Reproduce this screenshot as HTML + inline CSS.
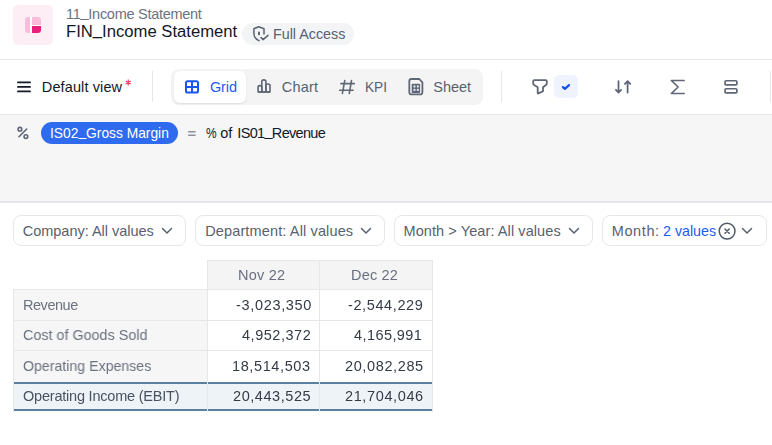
<!DOCTYPE html>
<html><head><meta charset="utf-8">
<style>
*{margin:0;padding:0;box-sizing:border-box}
html,body{width:772px;height:445px;overflow:hidden;background:#fff}
body{position:relative;font-family:"Liberation Sans",sans-serif}
.a{position:absolute}
.t{position:absolute;white-space:nowrap;line-height:20px;height:20px}
svg{position:absolute;overflow:visible}
.g{will-change:transform}
.u{position:relative;top:-1.6px}
</style></head><body>
<!-- header -->
<div class="a" style="left:13px;top:5px;width:40px;height:40px;border-radius:5px;background:#fdedf5"></div>
<div class="a" style="left:25px;top:17px;width:16px;height:16px;background:#fff;border-radius:3px"></div>
<div class="a" style="left:25px;top:17px;width:5px;height:16px;border-radius:3px 0 0 3px;background:#f9bddb"></div>
<div class="a" style="left:31.5px;top:17px;width:9.5px;height:7.5px;border-radius:0 3px 0 0;background:#f9bddb"></div>
<div class="a" style="left:31.5px;top:25.5px;width:9.5px;height:7.5px;border-radius:0 0 3px 0;background:#ea1f7b"></div>

<div class="a" style="left:242px;top:23px;width:112px;height:22px;border-radius:11px;background:#f3f4f6"></div>
<svg style="left:250px;top:24px" width="22" height="20" viewBox="0 0 22 20" fill="none" stroke="#596170" stroke-width="1.5" stroke-linecap="round" stroke-linejoin="round">
<path d="M9 16.6C5.8 15.2 3.9 12.6 3.9 9.4V4.7L8.8 2.8L14 4.7V10"/>
<path d="M11.1 13.6L13.1 15.6L18 11.4"/>
<path d="M9 8.4V10.2" stroke-width="2"/>
</svg>

<div class="a" style="left:0;top:59px;width:772px;height:1px;background:#e5e7eb"></div>

<!-- toolbar -->
<svg style="left:14px;top:77px" width="20" height="20" viewBox="0 0 20 20" fill="none" stroke="#141a2a" stroke-width="1.9" stroke-linecap="round">
<path d="M4 5.4H16M4 9.9H16M4 14.4H16"/>
</svg>
<svg style="left:123px;top:78px" width="10" height="9" viewBox="0 0 10 9" fill="none" stroke="#e3405a" stroke-width="1.15" stroke-linecap="butt">
<path d="M5.25 1.5V7.4M2.7 3L7.8 5.9M7.8 3L2.7 5.9"/>
</svg>
<div class="a" style="left:152px;top:71px;width:1px;height:31px;background:#e5e7eb"></div>

<div class="a" style="left:171px;top:69px;width:312px;height:36px;border-radius:8px;background:#f4f4f5"></div>
<div class="a" style="left:174px;top:71px;width:72px;height:32px;border-radius:6px;background:#fff;box-shadow:0 1px 2px rgba(16,24,40,0.10)"></div>
<svg style="left:180px;top:75px" width="24" height="24" viewBox="0 0 24 24" fill="none" stroke="#1b55f2" stroke-width="2">
<rect x="6" y="6.2" width="12" height="11.4" rx="1.6"/>
<path d="M12 6.2V17.6M6 11.9H18"/>
</svg>
<svg style="left:250px;top:74px" width="24" height="24" viewBox="0 0 24 24" fill="none" stroke="#5f6777" stroke-width="1.6" stroke-linejoin="round">
<path d="M8.1 18V13.2Q8.1 11.6 9.9 11.6Q11.8 11.6 11.8 13.2V18Z"/>
<path d="M11.8 18V7.6Q11.8 5.9 13.85 5.9Q15.9 5.9 15.9 7.6V18Z"/>
<path d="M15.9 18V11.6Q15.9 10 17.95 10Q20 10 20 11.6V18Z"/>
<path d="M8.1 18H20"/>
</svg>
<svg style="left:334px;top:74px" width="24" height="24" viewBox="0 0 24 24" fill="none" stroke="#5f6777" stroke-width="1.6" stroke-linecap="round">
<path d="M10.8 6.5L8.4 19.4M17.5 6.5L15.3 19.4M6.9 9.6H20.3M5.6 16.2H19.1"/>
</svg>
<svg style="left:402px;top:72px" width="28" height="28" viewBox="0 0 28 28" fill="none" stroke="#5f6777" stroke-width="1.8" stroke-linejoin="round">
<path d="M9.5 7H17.3L20.4 10.3V20.2Q20.4 22.4 18.2 22.4H9.5Q7.3 22.4 7.3 20.2V9.2Q7.3 7 9.5 7Z"/>
<rect x="9.7" y="11.7" width="8.4" height="9.3" rx="0.8" fill="#5f6777" stroke="none"/>
<rect x="11.5" y="13.5" width="1.9" height="1.9" fill="#f4f4f5" stroke="none"/>
<rect x="14.9" y="13.5" width="1.9" height="1.9" fill="#f4f4f5" stroke="none"/>
<rect x="11.5" y="16.9" width="1.9" height="1.9" fill="#f4f4f5" stroke="none"/>
<rect x="14.9" y="16.9" width="1.9" height="1.9" fill="#f4f4f5" stroke="none"/>
</svg>

<div class="a" style="left:501px;top:71px;width:1px;height:31px;background:#e5e7eb"></div>
<svg style="left:526px;top:72px" width="28" height="28" viewBox="0 0 28 28" fill="none" stroke="#5f6777" stroke-width="1.8" stroke-linejoin="round">
<path d="M7.2 9.3Q7.2 8.1 8.4 8.1H19.6Q20.8 8.1 20.8 9.3V11.5Q20.8 12.2 20.2 12.7L17 15.2V19.3L12.4 21.4Q11.7 21.7 11.7 21V15.2L7.8 12.8Q7.2 12.4 7.2 11.6Z"/>
</svg>
<div class="a" style="left:554px;top:75px;width:24px;height:23px;border-radius:5px;background:#eef3fe"></div>
<svg style="left:554px;top:75px" width="24" height="23" viewBox="0 0 24 23" fill="none" stroke="#1650f5" stroke-width="2.2" stroke-linecap="round" stroke-linejoin="round">
<path d="M8.9 12.1L10.9 13.9L15 10.1"/>
</svg>
<svg style="left:606px;top:74px" width="36" height="24" viewBox="0 0 36 24" fill="none" stroke="#5f6777" stroke-width="1.8" stroke-linecap="round" stroke-linejoin="round">
<path d="M12.5 7.2V18.4M9.9 15.9L12.5 18.5L15.1 15.9"/>
<path d="M21.6 7.4V18.6M18.9 9.9L21.6 7.2L24.3 9.9"/>
</svg>
<svg style="left:662px;top:74px" width="30" height="24" viewBox="0 0 30 24" fill="none" stroke="#5f6777" stroke-width="1.7" stroke-linecap="round" stroke-linejoin="round">
<path d="M22.1 6.5H9.4L16.1 13L9.4 19.5H22.1"/>
</svg>
<svg style="left:718px;top:74px" width="26" height="24" viewBox="0 0 26 24" fill="none" stroke="#5f6777" stroke-width="1.7" stroke-linejoin="round">
<rect x="7.05" y="6.75" width="11.8" height="4.1" rx="0.9"/>
<rect x="7.05" y="14.75" width="11.8" height="4.1" rx="0.9"/>
</svg>
<div class="a" style="left:770px;top:71px;width:1px;height:31px;background:#e5e7eb"></div>

<div class="a" style="left:0;top:114px;width:772px;height:1px;background:#e5e7eb"></div>

<!-- formula -->
<div class="a" style="left:0;top:115px;width:772px;height:86px;background:#f6f6f6"></div>
<div class="a" style="left:0;top:201px;width:772px;height:2px;background:#e6e7eb"></div>
<svg style="left:12px;top:122px" width="22" height="22" viewBox="0 0 22 22" fill="none" stroke="#5f6777" stroke-width="1.6" stroke-linecap="round">
<path d="M14.7 7L7 14.7"/>
<circle cx="7.9" cy="7.2" r="1.85"/>
<circle cx="13.9" cy="14.6" r="1.85"/>
</svg>
<div class="a" style="left:41px;top:122px;width:137px;height:22px;border-radius:11px;background:#2f6bee"></div>
<svg style="left:184px;top:126px" width="16" height="14" viewBox="0 0 16 14" fill="none" stroke="#8b929d" stroke-width="1.4">
<path d="M4.2 5.7H11.6M4.2 9.2H11.6"/>
</svg>

<!-- chips -->
<div class="a" style="left:13px;top:215px;width:173px;height:31px;border-radius:8px;border:1px solid #e5e7eb"></div>
<div class="a" style="left:195px;top:215px;width:190px;height:31px;border-radius:8px;border:1px solid #e5e7eb"></div>
<div class="a" style="left:394px;top:215px;width:199px;height:31px;border-radius:8px;border:1px solid #e5e7eb"></div>
<div class="a" style="left:602px;top:215px;width:165px;height:31px;border-radius:8px;border:1px solid #e5e7eb"></div>
<svg style="left:158px;top:222px" width="18" height="18" viewBox="0 0 18 18" fill="none" stroke="#586170" stroke-width="1.5" stroke-linecap="round" stroke-linejoin="round">
<path d="M4.5 6.5L9 11L13.5 6.5"/>
</svg>
<svg style="left:357px;top:222px" width="18" height="18" viewBox="0 0 18 18" fill="none" stroke="#586170" stroke-width="1.5" stroke-linecap="round" stroke-linejoin="round">
<path d="M4.5 6.5L9 11L13.5 6.5"/>
</svg>
<svg style="left:565px;top:222px" width="18" height="18" viewBox="0 0 18 18" fill="none" stroke="#586170" stroke-width="1.5" stroke-linecap="round" stroke-linejoin="round">
<path d="M4.5 6.5L9 11L13.5 6.5"/>
</svg>
<svg style="left:738px;top:222px" width="18" height="18" viewBox="0 0 18 18" fill="none" stroke="#586170" stroke-width="1.5" stroke-linecap="round" stroke-linejoin="round">
<path d="M4.5 6.5L9 11L13.5 6.5"/>
</svg>
<svg style="left:717px;top:221px" width="20" height="20" viewBox="0 0 20 20" fill="none" stroke="#4f5866" stroke-width="1.5" stroke-linecap="round">
<circle cx="10.1" cy="10.1" r="7.9"/>
<path d="M8 8L12.2 12.2M12.2 8L8 12.2"/>
</svg>

<!-- table -->
<div class="a" style="left:207px;top:260px;width:226px;height:30px;background:#f4f4f5"></div>
<div class="a" style="left:13px;top:289px;width:195px;height:93px;background:#f6f6f6"></div>
<div class="a" style="left:13px;top:384px;width:419px;height:25px;background:#eef3f8"></div>
<div class="a" style="left:207px;top:260px;width:226px;height:1px;background:#e5e7eb"></div>
<div class="a" style="left:13px;top:289px;width:420px;height:1px;background:#e5e7eb"></div>
<div class="a" style="left:13px;top:320px;width:420px;height:1px;background:#e5e7eb"></div>
<div class="a" style="left:13px;top:350px;width:420px;height:1px;background:#e5e7eb"></div>
<div class="a" style="left:13px;top:289px;width:1px;height:123px;background:#e5e7eb"></div>
<div class="a" style="left:207px;top:260px;width:1px;height:152px;background:#e5e7eb"></div>
<div class="a" style="left:319px;top:260px;width:1px;height:152px;background:#e5e7eb"></div>
<div class="a" style="left:432px;top:260px;width:1px;height:152px;background:#e5e7eb"></div>
<div class="a" style="left:14px;top:382px;width:193px;height:2px;background:#5b809f"></div>
<div class="a" style="left:208px;top:382px;width:111px;height:2px;background:#5b809f"></div>
<div class="a" style="left:320px;top:382px;width:112px;height:2px;background:#5b809f"></div>
<div class="a" style="left:14px;top:409px;width:193px;height:2px;background:#5b809f"></div>
<div class="a" style="left:208px;top:409px;width:111px;height:2px;background:#5b809f"></div>
<div class="a" style="left:320px;top:409px;width:112px;height:2px;background:#5b809f"></div>

<div class="t" style="left:66.06px;top:4.00px;font-size:14.5px;letter-spacing:-0.277px;color:#6b7280">11<span class="u">_</span>Income Statement</div>
<div class="t" style="left:65.71px;top:22.00px;font-size:16px;letter-spacing:0.000px;transform:scaleX(1.0408);transform-origin:0 0;color:#111827">FIN<span class="u">_</span>Income Statement</div>
<div class="t" style="left:272.76px;top:24.00px;font-size:14.5px;letter-spacing:0.000px;transform:scaleX(0.9859);transform-origin:0 0;color:#586170">Full Access</div>
<div class="t" style="left:41.80px;top:77.00px;font-size:14.5px;letter-spacing:0.117px;color:#111827">Default view</div>
<div class="t" style="left:209.91px;top:77.00px;font-size:14.5px;letter-spacing:-0.093px;color:#1d5bf0">Grid</div>
<div class="t" style="left:281.79px;top:77.00px;font-size:14.5px;letter-spacing:0.203px;color:#586170">Chart</div>
<div class="t" style="left:364.88px;top:77.00px;font-size:14.5px;letter-spacing:0.000px;transform:scaleX(0.9418);transform-origin:0 0;color:#586170">KPI</div>
<div class="t" style="left:433.34px;top:77.00px;font-size:14.5px;letter-spacing:-0.034px;color:#586170">Sheet</div>
<div class="t" style="left:50.10px;top:123.00px;font-size:14.5px;letter-spacing:0.000px;transform:scaleX(0.9513);transform-origin:0 0;color:#ffffff">IS02<span class="u">_</span>Gross Margin</div>
<div class="t" style="left:206.04px;top:123.00px;font-size:14.5px;letter-spacing:0.000px;transform:scaleX(0.8231);transform-origin:0 0;color:#111827">%</div>
<div class="t" style="left:220.31px;top:123.00px;font-size:14.5px;letter-spacing:-0.031px;color:#111827">of</div>
<div class="t" style="left:237.36px;top:123.00px;font-size:14.5px;letter-spacing:-0.687px;color:#111827">IS01<span class="u">_</span>Revenue</div>
<div class="t" style="left:22.79px;top:221.00px;font-size:14.5px;letter-spacing:-0.023px;color:#586170">Company: All values</div>
<div class="t" style="left:205.19px;top:221.00px;font-size:14.5px;letter-spacing:0.136px;color:#586170">Department: All values</div>
<div class="t" style="left:403.56px;top:221.00px;font-size:14.5px;letter-spacing:0.083px;color:#586170">Month &gt; Year: All values</div>
<div class="t" style="left:611.77px;top:221.00px;font-size:14.5px;letter-spacing:0.602px;color:#586170">Month:</div>
<div class="t" style="left:662.82px;top:221.00px;font-size:14.5px;letter-spacing:0.000px;transform:scaleX(0.9821);transform-origin:0 0;color:#1d5bf0">2 values</div>
<div class="t g" style="left:238.39px;top:265.00px;font-size:14.5px;letter-spacing:0.238px;color:#687080">Nov 22</div>
<div class="t g" style="left:351.13px;top:265.00px;font-size:14.5px;letter-spacing:0.182px;color:#687080">Dec 22</div>
<div class="t g" style="left:22.94px;top:295.00px;font-size:14.5px;letter-spacing:-0.463px;color:#6b7280">Revenue</div>
<div class="t g" style="left:23.08px;top:325.00px;font-size:14.5px;letter-spacing:0.000px;transform:scaleX(0.9894);transform-origin:0 0;color:#6b7280">Cost of Goods Sold</div>
<div class="t g" style="left:23.43px;top:356.00px;font-size:14.5px;letter-spacing:0.000px;transform:scaleX(0.9758);transform-origin:0 0;color:#6b7280">Operating Expenses</div>
<div class="t g" style="left:23.22px;top:386.00px;font-size:14.5px;letter-spacing:-0.211px;color:#4a5260">Operating Income (EBIT)</div>
<div class="t g" style="left:235.64px;top:295.00px;font-size:14.5px;letter-spacing:0.670px;color:#343b47">-3,023,350</div>
<div class="t g" style="left:347.95px;top:295.00px;font-size:14.5px;letter-spacing:0.613px;color:#343b47">-2,544,229</div>
<div class="t g" style="left:241.85px;top:325.00px;font-size:14.5px;letter-spacing:0.528px;color:#343b47">4,952,372</div>
<div class="t g" style="left:354.18px;top:325.00px;font-size:14.5px;letter-spacing:0.418px;color:#343b47">4,165,991</div>
<div class="t g" style="left:232.37px;top:356.00px;font-size:14.5px;letter-spacing:0.614px;color:#343b47">18,514,503</div>
<div class="t g" style="left:344.68px;top:356.00px;font-size:14.5px;letter-spacing:0.619px;color:#343b47">20,082,285</div>
<div class="t g" style="left:232.82px;top:386.00px;font-size:14.5px;letter-spacing:0.566px;color:#343b47">20,443,525</div>
<div class="t g" style="left:344.68px;top:386.00px;font-size:14.5px;letter-spacing:0.619px;color:#343b47">21,704,046</div>
</body></html>
